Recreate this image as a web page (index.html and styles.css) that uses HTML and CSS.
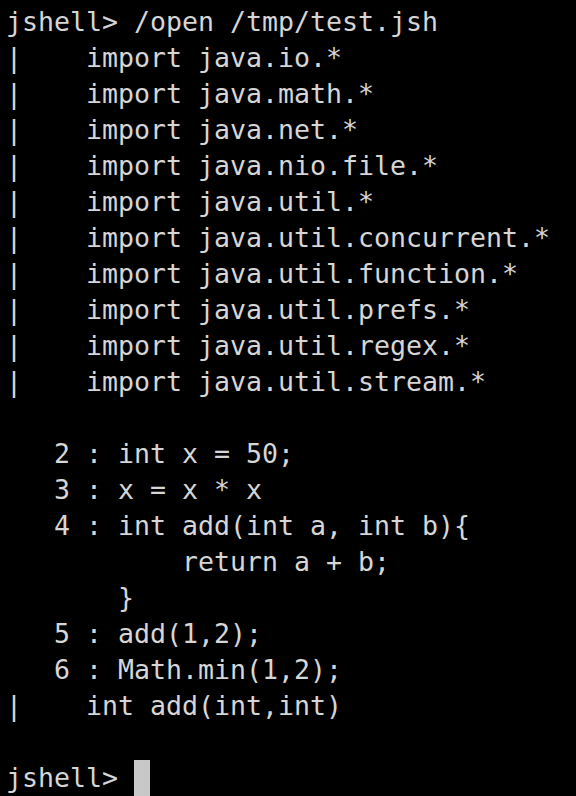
FILE: index.html
```html
<!DOCTYPE html>
<html>
<head>
<meta charset="utf-8">
<link rel="stylesheet" href="styles.css">
</head>
<body>
<pre class="term">jshell&gt; /open /tmp/test.jsh
|    import java.io.*
|    import java.math.*
|    import java.net.*
|    import java.nio.file.*
|    import java.util.*
|    import java.util.concurrent.*
|    import java.util.function.*
|    import java.util.prefs.*
|    import java.util.regex.*
|    import java.util.stream.*

   2 : int x = 50;
   3 : x = x * x
   4 : int add(int a, int b){
           return a + b;
       }
   5 : add(1,2);
   6 : Math.min(1,2);
|    int add(int,int)

jshell&gt; <span class="cursor"> </span></pre>
</body>
</html>
```

FILE: styles.css
```css
html, body {
  margin: 0;
  padding: 0;
  background: #000;
}
body {
  width: 576px;
  height: 796px;
  overflow: hidden;
}
.term {
  margin: 0;
  padding: 4px 0 0 6px;
  font-family: "DejaVu Sans Mono", monospace;
  font-size: 26.58px;
  line-height: 36px;
  color: #d6d6d6;
  white-space: pre;
}
.cursor {
  display: inline-block;
  width: 16px;
  height: 36px;
  vertical-align: top;
  background: #c8c8c8;
}
```
